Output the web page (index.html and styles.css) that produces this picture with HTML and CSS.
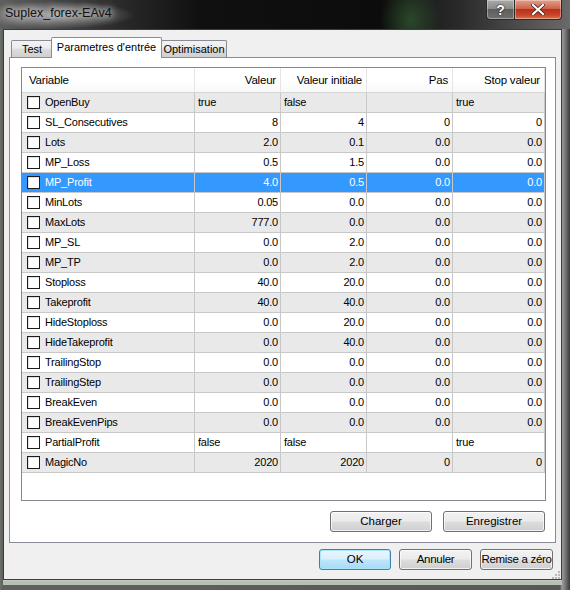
FILE: index.html
```html
<!DOCTYPE html>
<html>
<head>
<meta charset="utf-8">
<link rel="stylesheet" href="styles.css">
</head>
<body>
<div class="window">
  <div class="titlebar">
    <span class="title">Suplex_forex-EAv4</span>
    <div class="caption">
      <div class="cbtn help">?</div>
      <div class="cbtn close">
        <svg width="14" height="11" viewBox="0 0 14 11"><path d="M2 1 L12 10 M12 1 L2 10" stroke="#3a1a10" stroke-width="3.6" stroke-linecap="square"/><path d="M2 1 L12 10 M12 1 L2 10" stroke="#fff" stroke-width="2.2" stroke-linecap="square"/></svg>
      </div>
    </div>
  </div>
  <div class="client">
    <div class="tabs">
      <div class="tab tab-test">Test</div>
      <div class="tab active">Parametres d'entrée</div>
      <div class="tab tab-opt">Optimisation</div>
    </div>
    <div class="panel">
      <div class="grid">
        <div class="hdr">
          <div class="c c1">Variable</div>
          <div class="c c2 r">Valeur</div>
          <div class="c c3 r">Valeur initiale</div>
          <div class="c c4 r">Pas</div>
          <div class="c c5 r">Stop valeur</div>
        </div>
        <div class="row alt"><div class="c c1"><span class="cb"></span>OpenBuy</div><div class="c c2">true</div><div class="c c3">false</div><div class="c c4"></div><div class="c c5">true</div></div>
        <div class="row"><div class="c c1"><span class="cb"></span>SL_Consecutives</div><div class="c c2 r">8</div><div class="c c3 r">4</div><div class="c c4 r">0</div><div class="c c5 r">0</div></div>
        <div class="row alt"><div class="c c1"><span class="cb"></span>Lots</div><div class="c c2 r">2.0</div><div class="c c3 r">0.1</div><div class="c c4 r">0.0</div><div class="c c5 r">0.0</div></div>
        <div class="row"><div class="c c1"><span class="cb"></span>MP_Loss</div><div class="c c2 r">0.5</div><div class="c c3 r">1.5</div><div class="c c4 r">0.0</div><div class="c c5 r">0.0</div></div>
        <div class="row sel"><div class="c c1"><span class="cb"></span>MP_Profit</div><div class="c c2 r">4.0</div><div class="c c3 r">0.5</div><div class="c c4 r">0.0</div><div class="c c5 r">0.0</div></div>
        <div class="row"><div class="c c1"><span class="cb"></span>MinLots</div><div class="c c2 r">0.05</div><div class="c c3 r">0.0</div><div class="c c4 r">0.0</div><div class="c c5 r">0.0</div></div>
        <div class="row alt"><div class="c c1"><span class="cb"></span>MaxLots</div><div class="c c2 r">777.0</div><div class="c c3 r">0.0</div><div class="c c4 r">0.0</div><div class="c c5 r">0.0</div></div>
        <div class="row"><div class="c c1"><span class="cb"></span>MP_SL</div><div class="c c2 r">0.0</div><div class="c c3 r">2.0</div><div class="c c4 r">0.0</div><div class="c c5 r">0.0</div></div>
        <div class="row alt"><div class="c c1"><span class="cb"></span>MP_TP</div><div class="c c2 r">0.0</div><div class="c c3 r">2.0</div><div class="c c4 r">0.0</div><div class="c c5 r">0.0</div></div>
        <div class="row"><div class="c c1"><span class="cb"></span>Stoploss</div><div class="c c2 r">40.0</div><div class="c c3 r">20.0</div><div class="c c4 r">0.0</div><div class="c c5 r">0.0</div></div>
        <div class="row alt"><div class="c c1"><span class="cb"></span>Takeprofit</div><div class="c c2 r">40.0</div><div class="c c3 r">40.0</div><div class="c c4 r">0.0</div><div class="c c5 r">0.0</div></div>
        <div class="row"><div class="c c1"><span class="cb"></span>HideStoploss</div><div class="c c2 r">0.0</div><div class="c c3 r">20.0</div><div class="c c4 r">0.0</div><div class="c c5 r">0.0</div></div>
        <div class="row alt"><div class="c c1"><span class="cb"></span>HideTakeprofit</div><div class="c c2 r">0.0</div><div class="c c3 r">40.0</div><div class="c c4 r">0.0</div><div class="c c5 r">0.0</div></div>
        <div class="row"><div class="c c1"><span class="cb"></span>TrailingStop</div><div class="c c2 r">0.0</div><div class="c c3 r">0.0</div><div class="c c4 r">0.0</div><div class="c c5 r">0.0</div></div>
        <div class="row alt"><div class="c c1"><span class="cb"></span>TrailingStep</div><div class="c c2 r">0.0</div><div class="c c3 r">0.0</div><div class="c c4 r">0.0</div><div class="c c5 r">0.0</div></div>
        <div class="row"><div class="c c1"><span class="cb"></span>BreakEven</div><div class="c c2 r">0.0</div><div class="c c3 r">0.0</div><div class="c c4 r">0.0</div><div class="c c5 r">0.0</div></div>
        <div class="row alt"><div class="c c1"><span class="cb"></span>BreakEvenPips</div><div class="c c2 r">0.0</div><div class="c c3 r">0.0</div><div class="c c4 r">0.0</div><div class="c c5 r">0.0</div></div>
        <div class="row"><div class="c c1"><span class="cb"></span>PartialProfit</div><div class="c c2">false</div><div class="c c3">false</div><div class="c c4"></div><div class="c c5">true</div></div>
        <div class="row alt"><div class="c c1"><span class="cb"></span>MagicNo</div><div class="c c2 r">2020</div><div class="c c3 r">2020</div><div class="c c4 r">0</div><div class="c c5 r">0</div></div>
      </div>
      <div class="panel-btns">
        <div class="btn w102">Charger</div>
        <div class="btn w102">Enregistrer</div>
      </div>
    </div>
    <div class="dlg-btns">
      <div class="btn ok">OK</div>
      <div class="btn w73">Annuler</div>
      <div class="btn w73">Remise a zéro</div>
    </div>
    <div class="grip-row">
      <svg class="grip" width="8" height="8" viewBox="0 0 8 8"><g fill="#b9b9b9"><rect x="6" y="0" width="2" height="2"/><rect x="3" y="3" width="2" height="2"/><rect x="6" y="3" width="2" height="2"/><rect x="0" y="6" width="2" height="2"/><rect x="3" y="6" width="2" height="2"/><rect x="6" y="6" width="2" height="2"/></g></svg>
    </div>
  </div>
</div>
</body>
</html>
```

FILE: styles.css
```css
* { box-sizing: border-box; }
html, body { margin: 0; padding: 0; }
body { width: 570px; height: 590px; overflow: hidden; background: #2a2a2a; font-family: "Liberation Sans", Arial, sans-serif; }

.window {
  width: 570px; height: 590px;
  display: flex; flex-direction: column;
  background: linear-gradient(to right, #6c716a 0, #5e625c 3px, #585858 560px, #9a9a9a 562px, #7b7b7b 565px, #3a3a3a 570px);
}

.titlebar {
  height: 29px; flex: none;
  display: flex; align-items: flex-start;
  background:
    radial-gradient(ellipse 80px 14px at 55px 15px, rgba(170,170,170,0.9), rgba(120,120,120,0) 100%),
    radial-gradient(ellipse 30px 40px at 410px 20px, rgba(60,120,60,0.5), rgba(0,0,0,0) 100%),
    linear-gradient(to right, #5e5e5e 0, #2a2a2a 120px, #101010 200px, #0c0c0c 380px, #2a2a2a 460px, #6a6a6a 570px);
}
.title {
  padding: 6px 0 0 5px;
  font-size: 12.5px; color: #111;
  text-shadow: 0 0 6px #d8d8d8, 0 0 10px #cfcfcf;
}
.caption { margin-left: auto; margin-right: 8px; display: flex; }
.cbtn {
  height: 20px; display: flex; align-items: center; justify-content: center;
  border: 1px solid #2a2a2a; border-top: none;
  box-shadow: inset 0 0 0 1px rgba(255,255,255,0.35);
}
.help {
  width: 28px; border-right: none; border-radius: 0 0 0 4px;
  background: linear-gradient(to bottom, #a9aaa9 0, #8a8c8a 45%, #5d5f5d 50%, #6f716f 100%);
  color: #fff; font-weight: bold; font-size: 14px; font-family: "Liberation Sans", sans-serif;
  text-shadow: 0 0 2px #222, 0 0 1px #000;
}
.close {
  width: 48px; border-radius: 0 0 4px 0;
  background: linear-gradient(to bottom, #e2a08d 0, #d0644a 45%, #b9311a 50%, #c8462a 80%, #d8764f 100%);
}

.client {
  margin: 0 8px 11px 3px;
  flex: 1;
  background: #f0f0f0;
  border: 1px solid #3c3c3c;
  display: flex; flex-direction: column;
  box-shadow: 0 1px 0 #c4cbbf, 0 5px 0 #b8c0b4;
}

.tabs {
  height: 28px; margin-bottom: -1px;
  padding-left: 7px;
  display: flex; align-items: flex-end;
  position: relative; z-index: 2;
}
.tab {
  height: 17px; margin-bottom: 1px;
  border: 1px solid #898c95; border-bottom: none;
  border-radius: 2px 2px 0 0;
  background: linear-gradient(to bottom, #f3f3f3 0, #ebebeb 45%, #dddddd 50%, #cfcfcf 100%);
  font-size: 11px; color: #000; white-space: nowrap;
  text-align: center; line-height: 17px;
}
.tab-test { width: 42px; }
.tab.active {
  width: 111px; height: 21px; margin-bottom: 0; margin-left: -2px;
  background: #fff; line-height: 19px; position: relative; z-index: 3;
}
.tab-opt { width: 66px; margin-left: -1px; }

.panel {
  margin-left: 5px; width: 547px; height: 486px;
  border: 1px solid #898c95; background: #fff;
  padding: 9px 0 0 11px;
  position: relative; z-index: 1;
}

.grid {
  width: 525px; height: 434px;
  border: 1px solid #828790;
  background: #fff;
  font-size: 11px; color: #000; letter-spacing: -0.2px;
}
.hdr, .row { display: flex; }
.hdr { height: 25px; border-bottom: 1px solid #d5d5d5; background: linear-gradient(to bottom, #ffffff 0, #ffffff 50%, #f7f8f9 100%); }
.hdr .c { border-right: 1px solid #e5e5e5; line-height: 24px; padding: 0 5px 0 7px; font-size: 11.5px; }
.hdr .c.r { padding-right: 4px; text-align: right; }
.row { height: 20px; border-bottom: 1px solid #c8c8c8; }
.row.alt { background: #e9e9e9; }
.row.sel { background: #3399ff; color: #fff; }
.c { flex: none; border-right: 1px solid #c8c8c8; line-height: 19px; padding: 0 3px; white-space: nowrap; overflow: hidden; }
.row .c.r { text-align: right; padding-right: 2px; }
.c1 { width: 173px; display: flex; align-items: center; }
.row .c1 { padding-left: 5px; }
.c2, .c3, .c4 { width: 86px; }
.c5 { width: 92px; }
.cb {
  width: 13px; height: 13px; flex: none; margin-right: 5px;
  background: #fff; border: 1px solid #1c1c1c;
  box-shadow: inset 1px 1px 0 #e0e0e0;
}

.panel-btns {
  display: flex; justify-content: flex-end; gap: 11px;
  margin-top: 10px; margin-right: 10px;
}
.btn {
  height: 21px; border: 1px solid #707070; border-radius: 3px;
  background: linear-gradient(to bottom, #f2f2f2 0, #ebebeb 48%, #dddddd 52%, #cfcfcf 100%);
  box-shadow: inset 0 0 0 1px rgba(255,255,255,0.7);
  font-size: 11.5px; color: #000; text-align: center; line-height: 19px;
  white-space: nowrap; padding: 0;
}
.w102 { width: 102px; }
.w73 { width: 73px; letter-spacing: -0.3px; }
.ok {
  width: 72px; border-color: #3c7fb1;
  background: linear-gradient(to bottom, #eaf6fd 0, #d9f0fc 48%, #bee6fd 52%, #a7d9f5 100%);
  box-shadow: inset 0 0 0 1px #a9e4fb;
}
.dlg-btns {
  display: flex; justify-content: flex-end; gap: 8px;
  margin-top: 6px; margin-right: 8px;
}
.grip-row { display: flex; justify-content: flex-end; padding: 1px 1px 0 0; }
```
